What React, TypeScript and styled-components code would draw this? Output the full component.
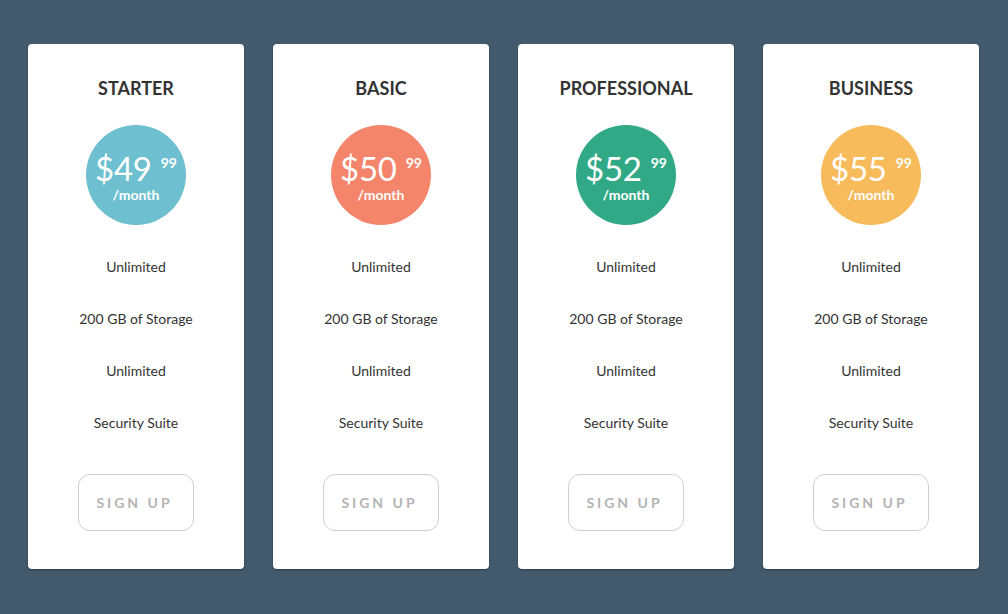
import styled, { createGlobalStyle } from "styled-components";

interface Plan {
  name: string;
  dollars: string;
  cents: string;
  color: string;
}

const plans: Plan[] = [
  { name: "STARTER", dollars: "49", cents: "99", color: "#6ebfcf" },
  { name: "BASIC", dollars: "50", cents: "99", color: "#f4846a" },
  { name: "PROFESSIONAL", dollars: "52", cents: "99", color: "#31a986" },
  { name: "BUSINESS", dollars: "55", cents: "99", color: "#f7bb5c" },
];

const features = ["Unlimited", "200 GB of Storage", "Unlimited", "Security Suite"];

const App = () => {
  return (
    <>
      <GlobalStyle />
      <Page>
        {plans.map((plan) => (
          <Card key={plan.name}>
            <Title>{plan.name}</Title>
            <Price $color={plan.color}>
              <Amount>
                ${plan.dollars}
                <Cents>{plan.cents}</Cents>
              </Amount>
              <Period>/month</Period>
            </Price>
            <Features>
              {features.map((f, i) => (
                <li key={i}>{f}</li>
              ))}
            </Features>
            <SignUp>SIGN UP</SignUp>
          </Card>
        ))}
      </Page>
    </>
  );
};

export default App;

const GlobalStyle = createGlobalStyle`
  html, body {
    margin: 0;
    padding: 0;
    background: #43596c;
    font-family: Lato, "Open Sans", sans-serif;
  }
`;

const Page = styled.div`
  width: 1008px;
  height: 614px;
  box-sizing: border-box;
  padding: 44px 28px 0;
  display: flex;
  gap: 29px;
  align-items: flex-start;
`;

const Card = styled.div`
  width: 216px;
  height: 525px;
  box-sizing: border-box;
  background: #fff;
  border-radius: 4px;
  box-shadow: 0 1px 2px rgba(0, 0, 0, 0.35);
  padding-top: 33px;
  display: flex;
  flex-direction: column;
  align-items: center;
`;

const Title = styled.h2`
  margin: 0;
  font-size: 18px;
  line-height: 22px;
  font-weight: 700;
  color: #333;
`;

const Price = styled.div<{ $color: string }>`
  margin-top: 26px;
  width: 100px;
  height: 100px;
  border-radius: 50%;
  background: ${(p) => p.$color};
  color: #fff;
  display: flex;
  flex-direction: column;
  align-items: center;
  justify-content: center;
`;

const Amount = styled.div`
  font-size: 33px;
  line-height: 34px;
  margin-top: 4px;
  display: flex;
  align-items: flex-start;
  letter-spacing: -0.3px;
`;

const Cents = styled.span`
  font-size: 14px;
  line-height: 14px;
  margin-left: 9px;
  margin-top: 5px;
  font-weight: 700;
  letter-spacing: 0;
`;

const Period = styled.div`
  font-size: 14px;
  line-height: 16px;
  margin-top: 2px;
  font-weight: 700;
`;

const Features = styled.ul`
  list-style: none;
  margin: 16px 0 0;
  padding: 0;
  text-align: center;

  li {
    height: 52px;
    line-height: 52px;
    font-size: 14px;
    color: #333;
  }
`;

const SignUp = styled.button`
  margin-top: 25px;
  width: 116px;
  height: 57px;
  background: #fff;
  border: 1px solid #cfcfcf;
  border-radius: 12px;
  font-family: Lato, sans-serif;
  font-size: 14px;
  font-weight: 700;
  letter-spacing: 3px;
  padding-left: 3px;
  color: #b4b4b4;
  cursor: pointer;
`;
